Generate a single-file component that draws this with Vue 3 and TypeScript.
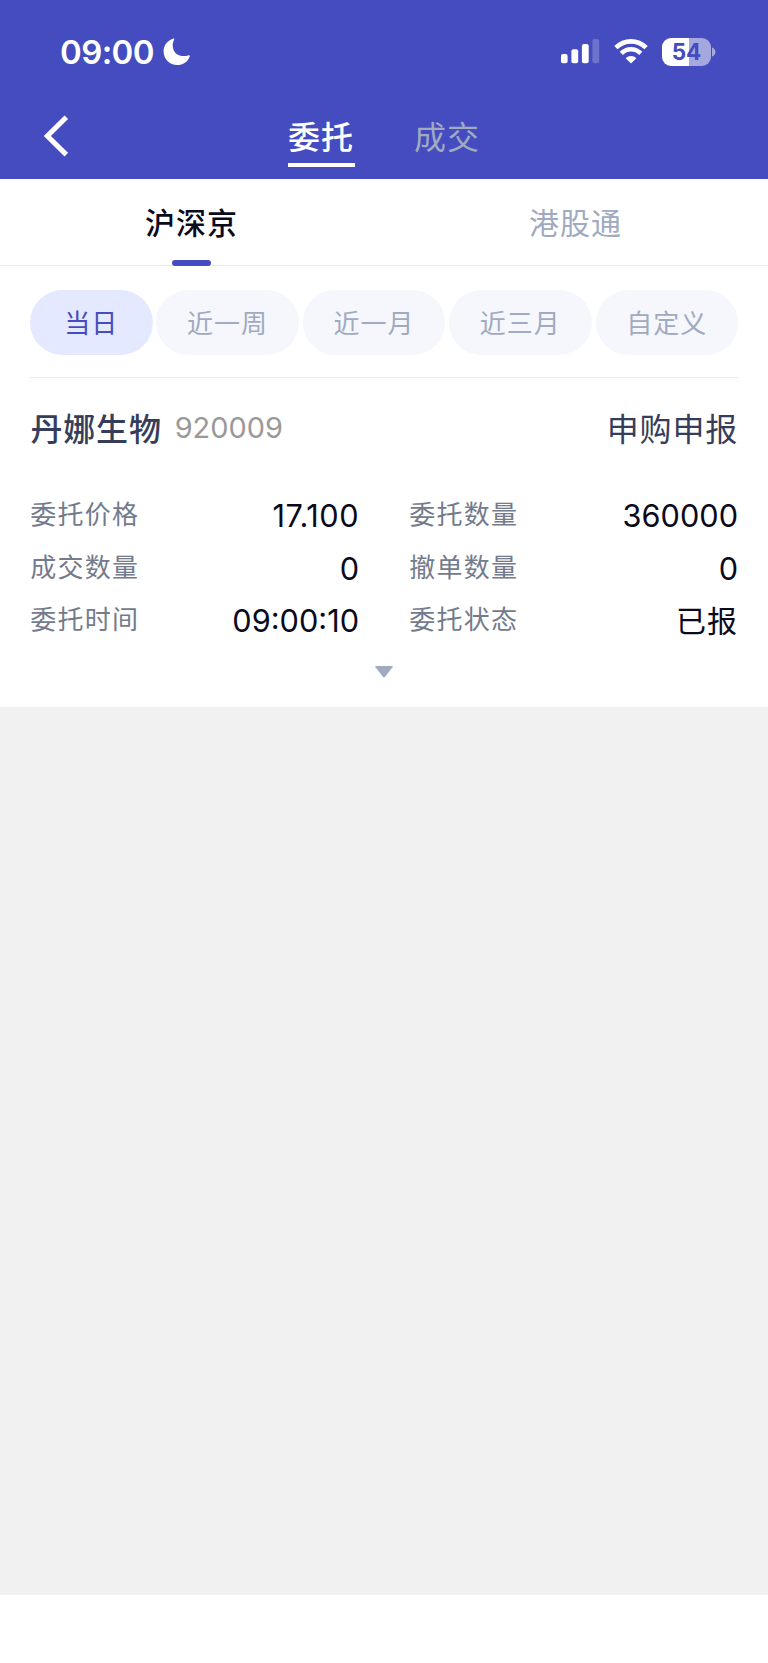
<script setup lang="ts">
import { ref } from 'vue'

interface Field {
  label: string
  value: string
  kind?: 'cjk' | 'price'
}

const pages: string[] = ['委托', '成交']
const markets: string[] = ['沪深京', '港股通']
const ranges: string[] = ['当日', '近一周', '近一月', '近三月', '自定义']

const page = ref(0)
const market = ref(0)
const range = ref(0)

const fields: Field[] = [
  { label: '委托价格', value: '17.100', kind: 'price' },
  { label: '委托数量', value: '360000' },
  { label: '成交数量', value: '0' },
  { label: '撤单数量', value: '0' },
  { label: '委托时间', value: '09:00:10' },
  { label: '委托状态', value: '已报', kind: 'cjk' },
]
</script>

<template>
  <div class="screen">
    <header class="header">
      <div class="status">
        <span class="clock">09:00</span>
        <svg class="moon" width="28" height="28" viewBox="0 0 28 28">
          <path d="M10.6 .6C4.600 2.400 .6 7.300 .6 13.200C.6 21 6.500 27 14.200 27C20 27 24.700 23.900 26.700 18.400C27 17.500 26.400 17 25.600 17.300C24 17.900 22.500 18.100 20.800 18.100C14 18.100 9.700 13.800 9.700 7.200C9.700 5.200 10.200 3.400 11.100 1.700C11.500 .9 11.300 .4 10.600 .6Z" fill="#fff" />
        </svg>
        <div class="indicators">
          <svg class="signal" width="39" height="25" viewBox="0 0 39 25" fill="#fff">
            <rect x="0" y="15" width="6.600" height="9.300" rx="2" />
            <rect x="10.400" y="10.300" width="6.800" height="14" rx="2" />
            <rect x="20.900" y="5" width="6.800" height="19.300" rx="2" />
            <rect x="31.400" y="0" width="6.800" height="24.300" rx="2" opacity=".22" />
          </svg>
          <svg class="wifi" width="34" height="25" viewBox="0 0 34 25">
            <path d="M1.900 8.700C10.300 .2 23.700 .2 32.100 8.700" fill="none" stroke="#fff" stroke-width="4.600" />
            <path d="M7.300 14.300C12.700 8.800 21.300 8.800 26.700 14.300" fill="none" stroke="#fff" stroke-width="4.500" />
            <path d="M17 24.500L11.700 19.200C14.700 16.400 19.300 16.400 22.300 19.200Z" fill="#fff" />
          </svg>
          <div class="battery">
            <span class="level">54</span>
          </div>
          <svg class="cap" width="4" height="10" viewBox="0 0 4 10">
            <path d="M0 .5C4.600 1.800 4.600 8.200 0 9.500Z" fill="#a4a8df" />
          </svg>
        </div>
      </div>
      <nav class="nav">
        <svg class="back" width="26" height="42" viewBox="0 0 26 42">
          <path d="M22.300 2.200L3.400 21L22.300 39.600" fill="none" stroke="#fff" stroke-width="5" />
        </svg>
        <div class="pages">
          <span
            v-for="(name, i) in pages"
            :key="name"
            class="page"
            :class="{ active: page === i }"
            @click="page = i"
          >{{ name }}</span>
        </div>
      </nav>
    </header>

    <div class="markets">
      <div
        v-for="(name, i) in markets"
        :key="name"
        class="market"
        :class="{ active: market === i }"
        @click="market = i"
      >{{ name }}</div>
    </div>

    <main class="sheet">
      <div class="ranges">
        <button
          v-for="(name, i) in ranges"
          :key="name"
          class="chip"
          :class="{ active: range === i }"
          @click="range = i"
        >{{ name }}</button>
      </div>

      <section class="order">
        <div class="title">
          <span class="name">丹娜生物</span>
          <span class="code">920009</span>
          <span class="kind">申购申报</span>
        </div>
        <div class="fields">
          <div v-for="f in fields" :key="f.label" class="field">
            <span class="label">{{ f.label }}</span>
            <span class="value" :class="f.kind">{{ f.value }}</span>
          </div>
        </div>
        <svg class="expand" width="18" height="12" viewBox="0 0 18 12">
          <path d="M.8 0H17.200Q18.200 .2 17.500 1.200L9.900 11Q9 12 8.100 11L.5 1.200Q-.2 .2 .8 0Z" fill="#a0aac0" />
        </svg>
      </section>
    </main>

    <div class="blank"></div>
    <footer class="safe-area"></footer>
  </div>
</template>

<style>
body {
  background: #fff;
}
</style>

<style scoped>
.screen {
  width: 768px;
  height: 1663px;
  display: flex;
  flex-direction: column;
  overflow: hidden;
  background: #fff;
  font-family: Inter, 'Noto Sans CJK SC', sans-serif;
}

.header {
  height: 179px;
  flex: none;
  background: #444cbf;
  color: #fff;
}

.status {
  height: 102px;
  display: flex;
  align-items: center;
  padding: 1px 52px 0 60px;
  box-sizing: border-box;
}

.clock {
  width: 102.500px;
  font-size: 33px;
  font-weight: 600;
  letter-spacing: -0.6px;
  white-space: nowrap;
}

.indicators {
  margin-left: auto;
  display: flex;
  align-items: center;
}

.signal {
  margin-right: 1px;
}

.wifi {
  margin-left: 13px;
}

.battery {
  width: 49px;
  height: 28px;
  margin-left: 14px;
  border-radius: 9px;
  background: linear-gradient(90deg, #fff 27px, #a4a8df 27px);
  display: flex;
  align-items: center;
  justify-content: center;
}

.level {
  color: #444cbf;
  font-size: 22.5px;
  line-height: 28px;
  font-weight: 700;
}

.cap {
  margin-left: 1px;
}

.nav {
  height: 77px;
  display: flex;
  align-items: flex-start;
  padding-left: 43.500px;
}

.back {
  margin-top: 13px;
}

.pages {
  display: flex;
  gap: 59px;
  margin-left: 218px;
}

.page {
  width: 67px;
  height: 65px;
  box-sizing: border-box;
  padding-top: 12px;
  font-size: 32px;
  line-height: 48px;
  letter-spacing: 1px;
  text-align: center;
  white-space: nowrap;
  color: #a0aac0;
}

.page.active {
  color: #fff;
  font-weight: 500;
  border-bottom: 4px solid #fff;
}

.markets {
  height: 87px;
  flex: none;
  display: flex;
  box-sizing: border-box;
  border-bottom: 1px solid #e8e8f0;
}

.market {
  flex: 1;
  position: relative;
  font-size: 30px;
  line-height: 89px;
  letter-spacing: 1px;
  text-indent: -1px;
  text-align: center;
  color: #a0aac0;
}

.market.active {
  color: #0a0a1c;
  font-weight: 500;
}

.market.active::after {
  content: '';
  position: absolute;
  left: 172px;
  bottom: -1px;
  width: 39px;
  height: 6px;
  border-radius: 3px;
  background: #444cbf;
}

.sheet {
  height: 441px;
  flex: none;
  padding: 24px 30px 0;
  box-sizing: border-box;
}

.ranges {
  display: flex;
  justify-content: space-between;
  padding-bottom: 22px;
  border-bottom: 1px solid #e9e9ec;
}

.chip {
  width: 142.500px;
  height: 65px;
  padding: 0 0 3px;
  border: 0;
  border-radius: 33px;
  background: #f6f7fc;
  color: #a0aac0;
  font-family: inherit;
  font-size: 26px;
  letter-spacing: 1px;
}

.chip.active {
  width: 122.500px;
  background: #e5e9ff;
  color: #444cbf;
}

.title {
  height: 98px;
  display: flex;
  align-items: center;
  color: #363d5a;
  font-size: 32px;
}

.name {
  margin-left: 0.5px;
  font-weight: 500;
  letter-spacing: 0.8px;
}

.code {
  margin-left: 13px;
  font-size: 28.9px;
  color: #999;
}

.kind {
  margin-left: auto;
  letter-spacing: 0.8px;
}

.fields {
  display: grid;
  grid-template-columns: 329px 329px;
  justify-content: space-between;
  grid-auto-rows: 52.500px;
  padding-top: 14px;
}

.field {
  display: flex;
  justify-content: space-between;
}

.label {
  padding-left: 0.3px;
  font-size: 26px;
  line-height: 49px;
  letter-spacing: 1.200px;
  color: #737b8c;
}

.value {
  font-size: 30.7px;
  line-height: 52px;
  color: #0a0a1c;
}

.value.price {
  letter-spacing: 0.5px;
}

.value.cjk {
  font-size: 30px;
  line-height: 53px;
  letter-spacing: 1px;
}

.expand {
  display: block;
  margin: 18px auto 0;
}

.blank {
  height: 888px;
  flex: none;
  background: #f1f1f1;
}

.safe-area {
  flex: 1;
  background: #fff;
}
</style>
